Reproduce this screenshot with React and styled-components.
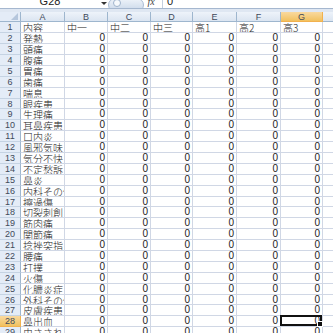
import React from "react";
import styled, { createGlobalStyle } from "styled-components";

const Global = createGlobalStyle`
  html, body { margin: 0; padding: 0; background: #fff; overflow: hidden; }
  body { font-family: "Noto Sans CJK JP", "Noto Sans", sans-serif; }
`;

const Screen = styled.div`
  width: 333px;
  height: 333px;
  overflow: hidden;
  display: flex;
  flex-direction: column;
  background: #fff;
`;

const FormulaBar = styled.div`
  height: 8px;
  flex: none;
  display: flex;
  align-items: flex-end;
  background: #fff;
  border-bottom: 1px solid #a5b7cf;
  overflow: hidden;
`;

const NameBox = styled.div`
  width: 100px;
  flex: none;
  display: flex;
  justify-content: center;
  align-items: flex-end;
  font-family: "Liberation Sans", Arial, sans-serif;
  font-size: 11px;
  line-height: 11px;
  color: #222;
  height: 12px;
  position: relative;
  top: -1px;
`;

const DropArrow = styled.div`
  width: 8px;
  flex: none;
  display: flex;
  justify-content: center;
  align-items: center;
  height: 8px;
`;

const Pill = styled.div`
  width: 36px;
  height: 14px;
  flex: none;
  border-radius: 7px;
  background: linear-gradient(#eef3f9, #c9d7e9);
  border: 1px solid #a9bcd5;
  box-sizing: border-box;
  position: relative;
  top: 4px;
  display: flex;
  align-items: flex-start;
`;

const FxIcon = styled.div`
  width: 14px;
  flex: none;
  font-family: "Liberation Serif", serif;
  font-style: italic;
  font-size: 10px;
  line-height: 10px;
  color: #444;
  text-align: center;
  position: relative;
  top: -1px;
`;

const Divider = styled.div`
  width: 1px;
  height: 12px;
  background: #c3cfdf;
  margin: 0 4px;
  flex: none;
`;

const FormulaText = styled.div`
  font-family: "Liberation Sans", Arial, sans-serif;
  font-size: 11px;
  line-height: 11px;
  color: #222;
  position: relative;
  top: -1px;
`;

const Band = styled.div`
  height: 3px;
  flex: none;
  background: #dfe7f2;
`;

const Grid = styled.div`
  display: grid;
  grid-template-columns: 21px 44px 43px 43px 42px 44px 44px 42px 20px;
  grid-template-rows: 10.3px;
  grid-auto-rows: 10.9px;
`;

const Corner = styled.div`
  background: #e4ecf7;
  border-right: 1px solid #9eb6ce;
  border-bottom: 1px solid #9eb6ce;
  box-sizing: border-box;
  position: relative;
  &::after {
    content: "";
    position: absolute;
    right: 2px;
    bottom: 1px;
    width: 0;
    height: 0;
    border-left: 7px solid transparent;
    border-bottom: 7px solid #b5c6dc;
  }
`;

const ColHead = styled.div`
  box-sizing: border-box;
  border-right: 1px solid ${(p) => (p.$sel ? "#f2b14e" : "#9eb6ce")};
  border-bottom: 1px solid ${(p) => (p.$sel ? "#f2b14e" : "#9eb6ce")};
  background: ${(p) =>
    p.$sel
      ? "linear-gradient(#f9d99f, #f1c15f)"
      : "linear-gradient(#eef3fa, #dbe5f1)"};
  font-family: "Liberation Sans", Arial, sans-serif;
  font-size: 9px;
  line-height: 10px;
  color: #3f4a5a;
  text-align: center;
  overflow: hidden;
`;

const RowHead = styled.div`
  box-sizing: border-box;
  border-right: 1px solid ${(p) => (p.$sel ? "#f2b14e" : "#9eb6ce")};
  border-bottom: 1px solid ${(p) => (p.$sel ? "#f2b14e" : "#c5d3e3")};
  background: ${(p) =>
    p.$sel ? "linear-gradient(#f9d99f, #f1c15f)" : "#e4ecf7"};
  font-family: "Liberation Sans", Arial, sans-serif;
  font-size: 9px;
  line-height: 10px;
  color: #3f4a5a;
  text-align: center;
  overflow: hidden;
`;

const Cell = styled.div`
  box-sizing: border-box;
  border-right: 1px solid #d0d7e5;
  border-bottom: 1px solid #d0d7e5;
  font-family: ${(p) =>
    p.$num
      ? '"Liberation Sans", Arial, sans-serif'
      : '"Noto Sans CJK JP", "Noto Sans", sans-serif'};
  font-size: 10px;
  font-weight: 300;
  line-height: ${(p) => (p.$num ? "10px" : "11px")};
  color: #222;
  text-align: ${(p) => (p.$num ? "right" : "left")};
  padding: 0 2px;
  white-space: nowrap;
  overflow: hidden;
  position: relative;
`;

const SelCell = styled(Cell)`
  overflow: visible;
  z-index: 2;
`;

const Selection = styled.div`
  position: absolute;
  left: -1px;
  top: -1px;
  right: 0;
  bottom: 0;
  border: 2px solid #111;
  pointer-events: none;
  &::after {
    content: "";
    position: absolute;
    right: -3px;
    bottom: -3px;
    width: 4px;
    height: 4px;
    background: #111;
    border: 1px solid #fff;
  }
`;

const cols = ["A", "B", "C", "D", "E", "F", "G", ""];
const headerRow = ["内容", "中一", "中二", "中三", "高1", "高2", "高3", ""];
const items = [
  "発熱", "頭痛", "腹痛", "胃痛", "歯痛", "喘息", "眼疾患", "生理痛",
  "耳鼻疾患", "口内炎", "風邪気味", "気分不快", "不定愁訴", "鼻炎",
  "内科その他", "擦過傷", "切裂刺創", "筋肉痛", "関節痛", "捻挫突指",
  "腰痛", "打撲", "火傷", "化膿炎症", "外科その他", "皮膚疾患", "鼻出血",
  "虫さされ",
];

export default function App() {
  return (
    <Screen>
      <Global />
      <FormulaBar>
        <NameBox>G28</NameBox>
        <DropArrow>
          <svg width="6" height="4" viewBox="0 0 6 4">
            <path d="M0 0 L6 0 L3 3 Z" fill="#333" />
          </svg>
        </DropArrow>
        <Pill>
          <svg width="10" height="10" viewBox="0 0 10 10" style={{ marginLeft: 3, marginTop: -1 }}>
            <circle cx="5" cy="5" r="3.5" fill="#f6f9fc" stroke="#9fb3cc" strokeWidth="1" />
          </svg>
        </Pill>
        <FxIcon>fx</FxIcon>
        <Divider />
        <FormulaText>0</FormulaText>
      </FormulaBar>
      <Band />
      <Grid>
        <Corner />
        {cols.map((c, i) => (
          <ColHead key={i} $sel={c === "G"}>{c}</ColHead>
        ))}
        <RowHead>1</RowHead>
        {headerRow.map((t, i) => (
          <Cell key={i}>{t}</Cell>
        ))}
        {items.map((name, r) => {
          const rowNum = r + 2;
          const sel = rowNum === 28;
          return (
            <React.Fragment key={rowNum}>
              <RowHead $sel={sel}>{rowNum}</RowHead>
              <Cell>{name}</Cell>
              {[0, 1, 2, 3, 4, 5].map((k) =>
                sel && k === 5 ? (
                  <SelCell key={k} $num>
                    0
                    <Selection />
                  </SelCell>
                ) : (
                  <Cell key={k} $num>0</Cell>
                )
              )}
              <Cell />
            </React.Fragment>
          );
        })}
      </Grid>
    </Screen>
  );
}
